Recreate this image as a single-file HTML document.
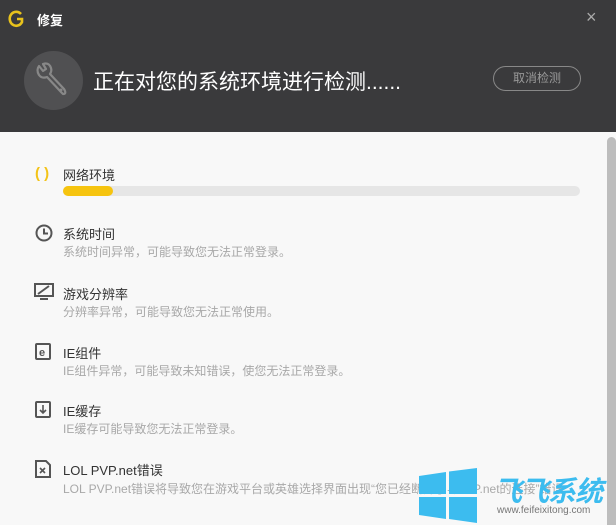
<!DOCTYPE html><html><head><meta charset="utf-8"><style>
*{margin:0;padding:0;box-sizing:border-box}
body{width:616px;height:525px;overflow:hidden;background:#f8f8f8;font-family:"Liberation Sans","Noto Sans CJK SC",sans-serif;position:relative}
.hd{position:absolute;left:0;top:0;width:616px;height:132px;background:#3a3a3c}
.a{position:absolute;white-space:nowrap}
.t{font-size:13px;color:#333}
.d{font-size:12px;color:#a8a8a8}
</style></head><body>
<div class="hd"></div>
<svg class="a" style="left:8px;top:9px" width="18" height="20" viewBox="0 0 18 20"><path d="M13 5 A6.5 7 0 1 0 14 13 L14 10 L9 10" fill="none" stroke="#e8c21c" stroke-width="2.6"/></svg>
<div class="a" style="left:37px;top:10px;font-size:13px;font-weight:bold;color:#fff">修复</div>
<div class="a" style="left:586px;top:7px;font-size:18px;color:#aaa">×</div>
<div class="a" style="left:24px;top:51px;width:59px;height:59px;border-radius:50%;background:#505052"></div>
<svg class="a" style="left:31px;top:58px" width="45" height="45" viewBox="0 0 45 45"><path d="M8 8 L12 13 L15 11 L12 6 Q18 4 20 10 Q21 13 19 16 L33 31 Q36 36 32 36 L30 34 L16 19 Q11 21 8 17 Q5 12 8 8Z" fill="none" stroke="#888" stroke-width="2.2" stroke-linejoin="round"/><circle cx="30" cy="32" r="1.5" fill="#888"/></svg>
<div class="a" style="left:93px;top:66px;font-size:21px;color:#fff">正在对您的系统环境进行检测......</div>
<div class="a" style="left:493px;top:66px;width:88px;height:25px;border:1px solid #888;border-radius:13px;color:#999;font-size:12px;text-align:center;line-height:23px">取消检测</div>
<div class="a" style="left:607px;top:137px;width:9px;height:388px;background:#bdbdbd;border-radius:5px 5px 0 0"></div>
<div class="a" style="left:35px;top:165px;font-size:15px;color:#f3c318;font-weight:bold">( )</div>
<div class="a t" style="left:63px;top:165px">网络环境</div>
<div class="a" style="left:63px;top:186px;width:517px;height:10px;border-radius:5px;background:#e6e6e6"></div>
<div class="a" style="left:63px;top:186px;width:50px;height:10px;border-radius:5px;background:#f6c40f"></div>
<svg class="a" style="left:35px;top:224px" width="18" height="18"><circle cx="9" cy="9" r="7.5" fill="none" stroke="#555" stroke-width="2"/><path d="M9 4.5V9.5H13" fill="none" stroke="#555" stroke-width="2"/></svg>
<div class="a t" style="left:63px;top:224px">系统时间</div>
<div class="a d" style="left:63px;top:243px">系统时间异常，可能导致您无法正常登录。</div>
<svg class="a" style="left:34px;top:283px" width="20" height="18"><rect x="1" y="1" width="18" height="12" fill="none" stroke="#555" stroke-width="2"/><path d="M4 11L15 3M6 16H14" stroke="#555" stroke-width="2"/></svg>
<div class="a t" style="left:63px;top:284px">游戏分辨率</div>
<div class="a d" style="left:63px;top:303px">分辨率异常，可能导致您无法正常使用。</div>
<svg class="a" style="left:35px;top:343px" width="16" height="17"><rect x="1" y="1" width="14" height="15" rx="1" fill="none" stroke="#555" stroke-width="2"/><text x="4" y="13" font-size="11" font-weight="bold" fill="#555" font-family="Liberation Sans">e</text></svg>
<div class="a t" style="left:63px;top:343px">IE组件</div>
<div class="a d" style="left:63px;top:362px">IE组件异常，可能导致未知错误，使您无法正常登录。</div>
<svg class="a" style="left:35px;top:401px" width="16" height="17"><rect x="1" y="1" width="14" height="15" rx="1" fill="none" stroke="#555" stroke-width="2"/><path d="M8 4V12M5 9L8 12L11 9" fill="none" stroke="#555" stroke-width="1.6"/></svg>
<div class="a t" style="left:63px;top:401px">IE缓存</div>
<div class="a d" style="left:63px;top:420px">IE缓存可能导致您无法正常登录。</div>
<svg class="a" style="left:35px;top:460px" width="16" height="18"><path d="M1 1H11L15 5V17H1Z" fill="none" stroke="#555" stroke-width="2"/><path d="M5 8L10 13M10 8L5 13" stroke="#555" stroke-width="1.6"/></svg>
<div class="a t" style="left:63px;top:460px">LOL PVP.net错误</div>
<div class="a d" style="left:63px;top:480px">LOL PVP.net错误将导致您在游戏平台或英雄选择界面出现“您已经断开了与PvP.net的连接”错误</div>
<svg class="a" style="left:419px;top:468px" width="60" height="56"><path d="M0 8L27 4V26H0ZM30 3.5L58 0V26H30ZM0 29H27V51L0 47ZM30 29H58V55L30 51Z" fill="#3cbcef"/></svg>
<div class="a" style="left:494px;top:470px;font-size:28px;font-weight:bold;font-style:italic;color:#3cbcef;letter-spacing:-1px">飞飞系统</div>
<div class="a" style="left:497px;top:505px;font-size:10px;color:#777">www.feifeixitong.com</div>
</body></html>
